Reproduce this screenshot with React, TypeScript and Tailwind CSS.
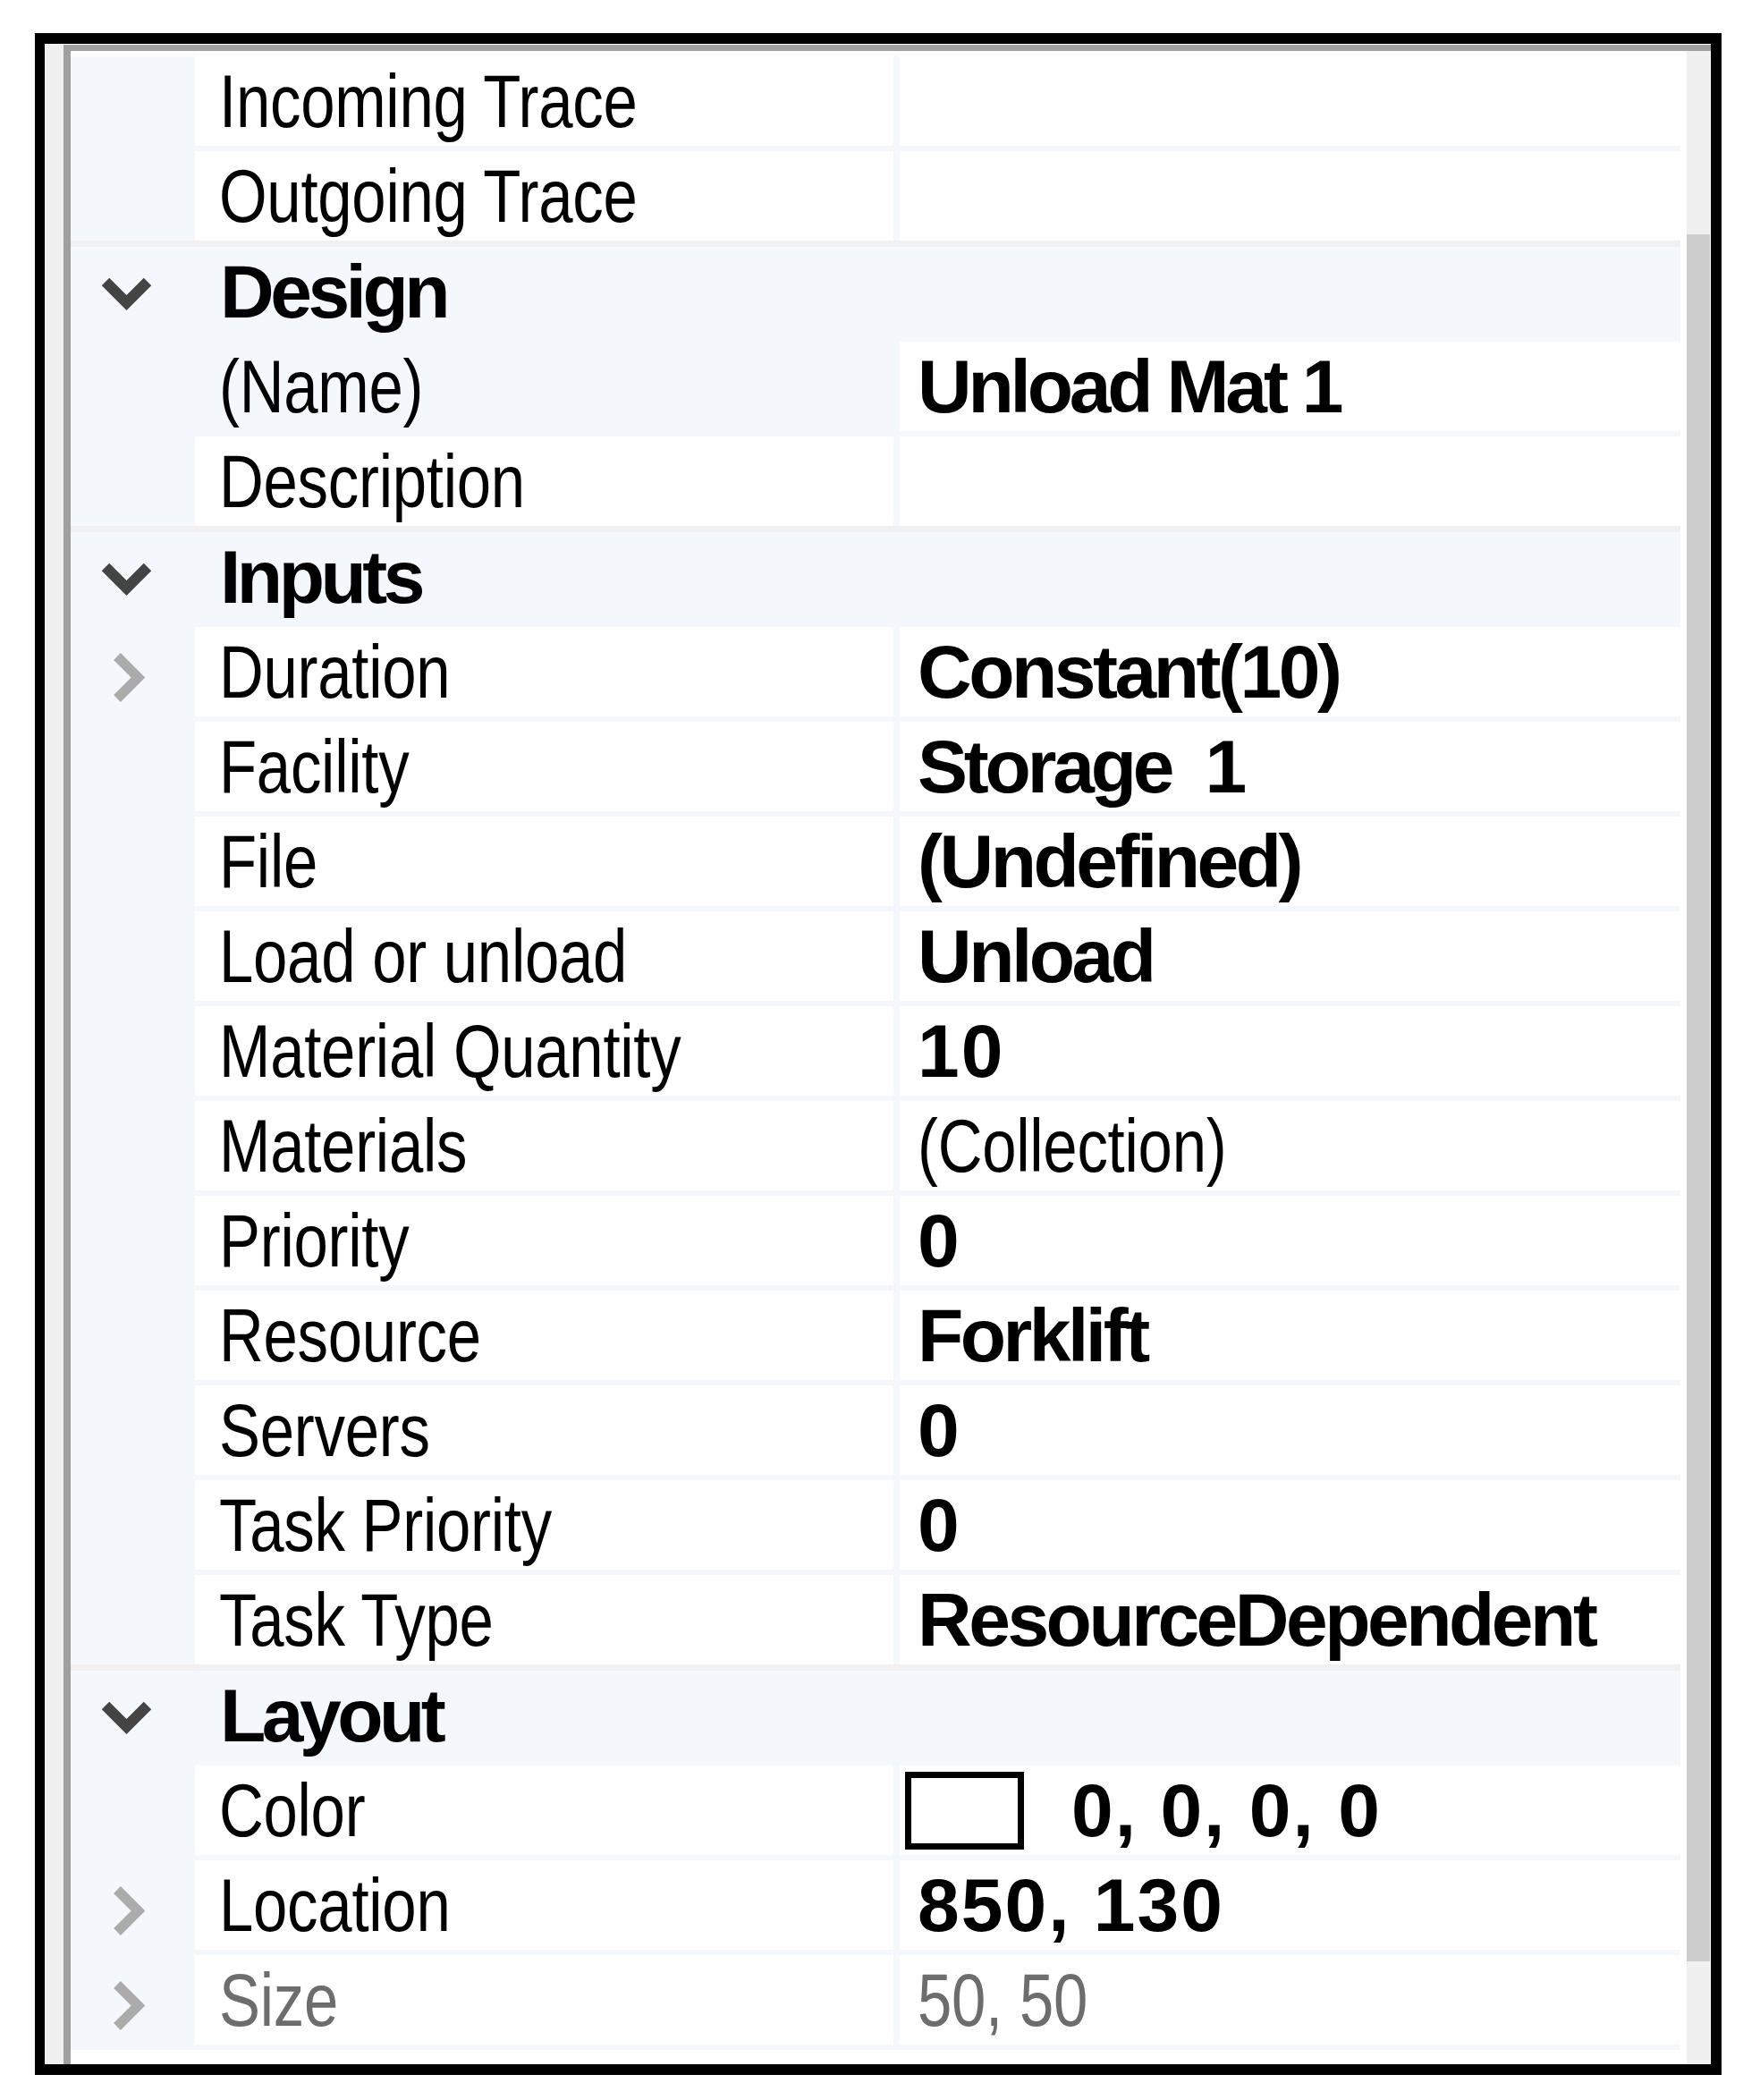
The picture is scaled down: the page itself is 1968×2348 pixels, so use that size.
import React from "react";

type Prop = {
  kind: "prop";
  label: string;
  value?: string;
  bold?: boolean;
  expand?: boolean;
  gray?: boolean;
  labelBlue?: boolean;
  swatch?: boolean;
  digits?: boolean;
  tight?: boolean;
};
type Cat = { kind: "cat"; name: string };
type Item = Prop | Cat;

const items: Item[] = [
  { kind: "prop", label: "Incoming Trace" },
  { kind: "prop", label: "Outgoing Trace" },
  { kind: "cat", name: "Design" },
  { kind: "prop", label: "(Name)", value: "Unload Mat 1", bold: true, labelBlue: true, tight: true },
  { kind: "prop", label: "Description" },
  { kind: "cat", name: "Inputs" },
  { kind: "prop", label: "Duration", value: "Constant(10)", bold: true, expand: true },
  { kind: "prop", label: "Facility", value: "Storage\u00a0 1", bold: true, tight: true },
  { kind: "prop", label: "File", value: "(Undefined)", bold: true },
  { kind: "prop", label: "Load or unload", value: "Unload", bold: true },
  { kind: "prop", label: "Material Quantity", value: "10", bold: true, digits: true },
  { kind: "prop", label: "Materials", value: "(Collection)" },
  { kind: "prop", label: "Priority", value: "0", bold: true, digits: true },
  { kind: "prop", label: "Resource", value: "Forklift", bold: true },
  { kind: "prop", label: "Servers", value: "0", bold: true, digits: true },
  { kind: "prop", label: "Task Priority", value: "0", bold: true, digits: true },
  { kind: "prop", label: "Task Type", value: "ResourceDependent", bold: true },
  { kind: "cat", name: "Layout" },
  { kind: "prop", label: "Color", value: "0, 0, 0, 0", bold: true, swatch: true, digits: true },
  { kind: "prop", label: "Location", value: "850, 130", bold: true, expand: true, digits: true },
  { kind: "prop", label: "Size", value: "50, 50", expand: true, gray: true },
];

const REG = "font-['Liberation_Sans','Arial',sans-serif] font-normal tracking-[-0.3px]";
const BOLD = "font-['Liberation_Sans','Arial',sans-serif] font-bold tracking-[-3.5px]";
const BOLD_TIGHT = "font-['Liberation_Sans','Arial',sans-serif] font-bold tracking-[-4.2px]";
const BOLD_DIGITS = "font-['Liberation_Sans','Arial',sans-serif] font-bold tracking-[2px]";

function Narrow({ children }: { children: React.ReactNode }) {
  return <span className="inline-block origin-left scale-x-[0.82]">{children}</span>;
}

function ChevDown() {
  return (
    <svg width="59" height="40" viewBox="0 0 59 40" className="block">
      <polyline
        points="6,6 29.5,29.5 53,6"
        fill="none"
        stroke="#444444"
        strokeWidth="12"
        strokeLinejoin="miter"
      />
    </svg>
  );
}

function ChevRight() {
  return (
    <svg width="40" height="59" viewBox="0 0 40 59" className="block">
      <polyline
        points="6,6 29.5,29.5 6,53"
        fill="none"
        stroke="#ababab"
        strokeWidth="11"
        strokeLinejoin="miter"
      />
    </svg>
  );
}

function PropRow({ p }: { p: Prop }) {
  const color = p.gray ? "text-[#6d6d6d]" : "text-black";
  const valueFont = p.bold ? (p.digits ? BOLD_DIGITS : p.tight ? BOLD_TIGHT : BOLD) : REG;
  const valueText = p.value ?? "";
  return (
    <div className="flex h-[100px] mt-[6px]">
      <div className="w-[139px] shrink-0 pt-[27px] pl-[46px]">{p.expand && <ChevRight />}</div>
      <div
        className={`w-[781px] shrink-0 pl-[27px] overflow-hidden whitespace-nowrap text-[84px] leading-[100px] ${REG} ${color} ${
          p.labelBlue ? "" : "bg-white"
        }`}
      >
        <Narrow>{p.label}</Narrow>
      </div>
      <div className="w-[7px] shrink-0" />
      {p.swatch ? (
        <div className="flex-1 bg-white pl-[6px] flex items-center overflow-hidden">
          <div className="w-[133px] h-[87px] border-[7px] border-black bg-white shrink-0" />
          <span className={`ml-[53px] whitespace-nowrap text-[84px] leading-[100px] ${valueFont} ${color}`}>
            {valueText}
          </span>
        </div>
      ) : (
        <div
          className={`flex-1 bg-white pl-[20px] overflow-hidden whitespace-nowrap text-[84px] leading-[100px] ${valueFont} ${color}`}
        >
          {p.bold ? valueText : <Narrow>{valueText}</Narrow>}
        </div>
      )}
    </div>
  );
}

function CatRow({ c }: { c: Cat }) {
  return (
    <>
      <div className="h-[7px] bg-[#f0f0f0]" />
      <div className="flex h-[100px]">
        <div className="w-[139px] shrink-0 pt-[33px] pl-[33px]">
          <ChevDown />
        </div>
        <div className="pl-[28px] whitespace-nowrap text-[84px] leading-[100px] text-black font-['Liberation_Sans','Arial',sans-serif] font-bold tracking-[-4.5px]">
          {c.name}
        </div>
      </div>
    </>
  );
}

export default function App() {
  return (
    <div className="w-[1968px] h-[2348px] bg-white pl-[39px] pt-[37px]">
      <div className="w-[1886px] h-[2283px] border-black border-l-[11px] border-t-[12px] border-r-[12px] border-b-[12px] flex flex-col">
        <div className="h-[1px] bg-white shrink-0" />
        <div className="flex flex-1 min-h-0">
          <div className="w-[21px] bg-[#f0f0f0] shrink-0" />
          <div className="flex-1 flex border-t-[7px] border-l-[8px] border-[#a0a0a0] min-w-0">
            <div className="w-[1807px] bg-white shrink-0 overflow-hidden">
              <div className="w-[1800px] bg-[#f4f7fc] pb-[6px]">
                {items.map((it, i) =>
                  it.kind === "cat" ? <CatRow key={i} c={it} /> : <PropRow key={i} p={it} />
                )}
              </div>
            </div>
            <div className="w-[26px] bg-[#f0f0f0] flex flex-col shrink-0">
              <div className="h-[205px] shrink-0" />
              <div className="h-[1931px] bg-[#cdcdcd] shrink-0" />
            </div>
            <div className="w-[1px] bg-white shrink-0" />
          </div>
        </div>
      </div>
    </div>
  );
}
